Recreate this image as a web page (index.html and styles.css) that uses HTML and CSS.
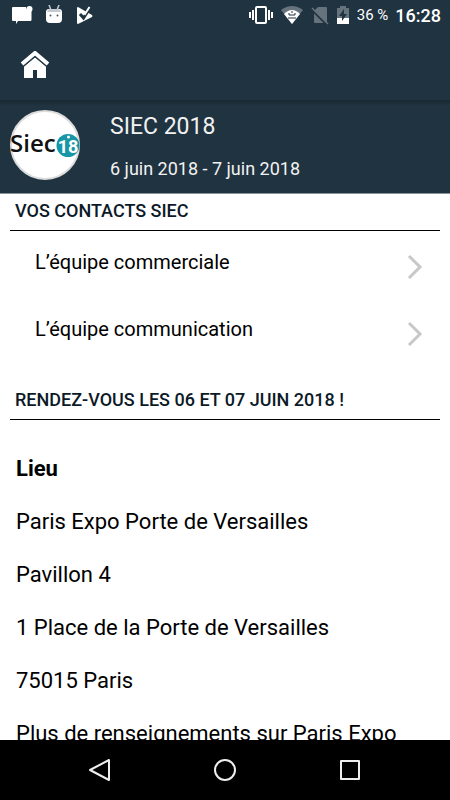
FILE: index.html
```html
<!DOCTYPE html>
<html lang="fr">
<head>
  <meta charset="UTF-8" />
  <meta name="viewport" content="width=device-width, initial-scale=1" />
  <title>SIEC 2018</title>
  <link rel="stylesheet" href="styles.css">
</head>
<body>

  <div class="status-bar">
    <div class="status-icons">
      <svg width="22" height="20" viewBox="0 0 22 20">
        <path d="M2 2h13a4 4 0 0 0 5.500 3.500V15a1 1 0 0 1-1 1H7l-2 3v-3H2a1 1 0 0 1-1-1V3a1 1 0 0 1 1-1z" fill="#fff" />
        <circle cx="18.500" cy="4" r="3" fill="#fff" />
      </svg>
      <svg width="18" height="20" viewBox="0 0 18 20">
        <path d="M4 0l2 5M14 0l-2 5" stroke="#c4cacf" stroke-width="1.500" />
        <path d="M1 7q0-3 3-3h10q3 0 3 3v7q0 4-4 4H5q-4 0-4-4z" fill="#fff" />
        <path d="M2 7q1-3 3-3h8q2 0 3 3z" fill="#c4cacf" />
        <circle cx="5.500" cy="10.500" r="1" fill="#4b5862" />
        <circle cx="12.500" cy="10.500" r="1" fill="#4b5862" />
      </svg>
      <svg width="18" height="20" viewBox="0 0 18 20">
        <path d="M2 3q0-1 1-1l14 8q1 1 0 2L3 19q-1 0-1-1z" fill="#fff" />
        <path d="M5 9l3.500 4L15 3" fill="none" stroke="#203341" stroke-width="3" />
        <path d="M8 7l2 2 4.500-7" fill="none" stroke="#fff" stroke-width="2" />
      </svg>
    </div>
    <div class="status-info">
      <svg width="24" height="20" viewBox="0 0 24 20">
        <rect x="7" y="2" width="10" height="16" rx="1" fill="none" stroke="#fff" stroke-width="2" />
        <path d="M4 5v10M20 5v10" stroke="#fff" stroke-width="2" />
        <path d="M1 7v6M23 7v6" stroke="#fff" stroke-width="2" />
      </svg>
      <svg width="24" height="20" viewBox="0 0 24 20">
        <path d="M1 5q11-8 22 0L12 19z" fill="#66737c" />
        <path d="M4 9q8-8 16 0l-8 10z" fill="#fff" />
        <path d="M9 8v2h6V8M8 13h8M12 6v2" fill="none" stroke="#203341" stroke-width="1" />
      </svg>
      <svg width="18" height="20" viewBox="0 0 18 20">
        <path d="M7 2h8q1 0 1 1v14q0 1-1 1H4q-1 0-1-1V6z" fill="#66737c" />
        <path d="M1 5l15 15" stroke="#203341" stroke-width="2" />
        <path d="M1 3l16 16" stroke="#66737c" stroke-width="1.500" />
      </svg>
      <svg width="14" height="20" viewBox="0 0 14 20">
        <path d="M1 3h3V1h6v2h3v16H1z" fill="#66737c" />
        <path d="M1 13h12v6H1z" fill="#fff" />
        <path d="M8 4l-5 7h3v5l5-7H8z" fill="#203341" />
      </svg>
      <span class="percent">36 %</span>
      <span class="clock">16:28</span>
    </div>
  </div>

  <header class="toolbar">
    <button class="home" type="button" aria-label="Accueil">
      <svg width="30" height="28" viewBox="0 0 30 28">
        <path d="M2 13L15 2l13 11" fill="none" stroke="#fff" stroke-width="4" />
        <path d="M4 15.500L15 6l11 9.500V27h-9v-8h-4v8H4z" fill="#fff" />
        <path d="M3.500 15.500L15 6l11.500 9.500" fill="none" stroke="#203341" stroke-width="1" />
      </svg>
    </button>
  </header>

  <section class="event">
    <svg class="logo" width="70" height="70" viewBox="0 0 70 70" role="img" aria-label="Siec 18">
      <circle cx="35" cy="35" r="34" fill="#fff" stroke="#dcdcdc" stroke-width="2" />
      <text class="logo-name" x="0" y="42">Siec</text>
      <circle cx="58" cy="35.500" r="11.500" fill="#1996a5" />
      <circle cx="58.500" cy="27" r="1.500" fill="#fff" />
      <text class="logo-year" x="58" y="43">18</text>
    </svg>
    <div>
      <h1>SIEC 2018</h1>
      <p class="dates">6 juin 2018 - 7 juin 2018</p>
    </div>
  </section>

  <main class="content">
    <h2>VOS CONTACTS SIEC</h2>
    <ul class="contacts">
      <li>
        <a href="#commerciale">L’équipe commerciale
          <svg width="18" height="26" viewBox="0 0 18 26"><path d="M2 2l11 11L2 24" /></svg>
        </a>
      </li>
      <li>
        <a href="#communication">L’équipe communication
          <svg width="18" height="26" viewBox="0 0 18 26"><path d="M2 2l11 11L2 24" /></svg>
        </a>
      </li>
    </ul>

    <h2>RENDEZ-VOUS LES 06 ET 07 JUIN 2018 !</h2>
    <div class="place">
      <p><strong>Lieu</strong></p>
      <p>Paris Expo Porte de Versailles</p>
      <p>Pavillon 4</p>
      <p>1 Place de la Porte de Versailles</p>
      <p>75015 Paris</p>
      <p>Plus de renseignements sur Paris Expo</p>
    </div>
  </main>

  <nav class="nav-bar">
    <button type="button" aria-label="Retour">
      <svg width="24" height="24" viewBox="0 0 24 24"><path d="M21 2v20L2 12z" /></svg>
    </button>
    <button type="button" aria-label="Écran d'accueil">
      <svg width="24" height="24" viewBox="0 0 24 24"><circle cx="12" cy="12" r="10" /></svg>
    </button>
    <button type="button" aria-label="Applications récentes">
      <svg width="24" height="24" viewBox="0 0 24 24"><rect x="3" y="3" width="18" height="18" /></svg>
    </button>
  </nav>

</body>
</html>
```
FILE: styles.css
```css
* {
  box-sizing: border-box;
}

body {
  margin: 0;
  height: 100vh;
  display: flex;
  flex-direction: column;
  overflow: hidden;
  font-family: Roboto, sans-serif;
  background-color: #fff;
  color: #000;
}

h1, h2, p, ul {
  margin: 0;
  padding: 0;
  font-weight: normal;
}

svg {
  display: block;
  flex: none;
}

button {
  padding: 0;
  border: none;
  background: none;
  cursor: pointer;
}

.status-bar {
  display: flex;
  justify-content: space-between;
  flex: none;
  height: 30px;
  padding: 0 9px 0 11px;
  background-color: #203341;
  color: #fff;
}

.status-icons, .status-info {
  display: flex;
  align-items: center;
}

.status-icons {
  gap: 12px;
}

.status-info {
  gap: 7px;
}

.percent {
  font-size: 15px;
}

.clock {
  font-size: 18px;
  font-weight: 500;
}

.toolbar {
  flex: none;
  display: flex;
  align-items: center;
  height: 70px;
  padding: 0 20px;
  background-color: #203341;
}

.event {
  flex: none;
  display: flex;
  gap: 30px;
  height: 94px;
  padding: 10px;
  border-bottom: 1px solid #87929a;
  background: linear-gradient(#1a2933, #203341 6px);
  color: #f2f2f2;
}

h1 {
  font-size: 23px;
  line-height: 34px;
}

.dates {
  margin-top: 13px;
  font-size: 18px;
  line-height: 24px;
}

.logo-name {
  font-family: "Open Sans", sans-serif;
  font-size: 24px;
  font-weight: 600;
  fill: #111;
}

.logo-year {
  font-family: Roboto, sans-serif;
  font-size: 18px;
  font-weight: bold;
  text-anchor: middle;
  fill: #fff;
}

.content {
  flex: 1;
  min-height: 0;
  overflow: hidden;
  padding: 0 10px;
}

h2 {
  padding: 5px 5px 7px;
  border-bottom: 1px solid #000;
  color: #0c1a28;
  font-size: 18px;
  line-height: 24px;
  font-weight: 500;
}

.contacts {
  list-style: none;
  padding-bottom: 18px;
}

.contacts a {
  display: flex;
  justify-content: space-between;
  height: 67px;
  padding: 18px 15px 0 25px;
  color: #000;
  font-size: 20px;
  line-height: 26px;
  text-decoration: none;
}

.contacts svg {
  margin-top: 5px;
  fill: none;
  stroke: #c8c8c8;
  stroke-width: 3;
}

.place {
  padding: 35px 6px 0;
  font-size: 22px;
  line-height: 28px;
}

.place p {
  margin-bottom: 25px;
  white-space: nowrap;
}

.nav-bar {
  flex: none;
  display: flex;
  justify-content: center;
  gap: 101px;
  height: 60px;
  background-color: #000;
}

.nav-bar svg {
  fill: none;
  stroke: #eee;
  stroke-width: 2;
  stroke-linejoin: round;
}
```
